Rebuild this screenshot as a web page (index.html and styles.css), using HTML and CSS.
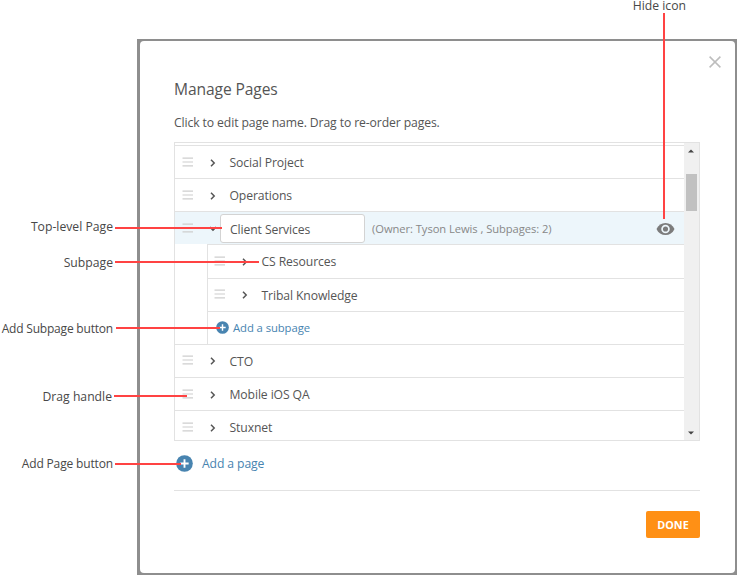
FILE: index.html
```html
<!DOCTYPE html>
<html lang="en">
<head>
<meta charset="utf-8">
<title>Manage Pages</title>
<link rel="stylesheet" href="styles.css">
</head>
<body>
<svg class="defs" aria-hidden="true">
  <symbol id="handle" viewBox="0 0 12 10"><path d="M.5 1.2H11M.5 5H11M.5 8.8H11" fill="none" stroke="#cecece" stroke-width="1.2"/></symbol>
  <symbol id="chevron" viewBox="0 0 8 8"><path d="M2 .8L5.2 4L2 7.2" fill="none" stroke="#555" stroke-width="1.5"/></symbol>
  <symbol id="plus" viewBox="0 0 18 18"><circle cx="9" cy="9" r="8.8" fill="#4884b0"/><path d="M9 4.6v8.8M4.6 9h8.8" stroke="#fff" stroke-width="2"/></symbol>
</svg>
<div class="backdrop">
  <main class="modal">
    <svg class="close" viewBox="0 0 12 12"><path d="M.6.6l10.8 10.8M11.4.6L.6 11.4" fill="none" stroke="#bdbdbd" stroke-width="1.5"/></svg>
    <h1>Manage Pages</h1>
    <p class="hint">Click to edit page name. Drag to re-order pages.</p>
    <div class="list">
      <div class="rows">
        <div class="row"><svg class="handle"><use href="#handle"/></svg><svg class="chevron"><use href="#chevron"/></svg><span>Social Project</span></div>
        <div class="row"><svg class="handle"><use href="#handle"/></svg><svg class="chevron"><use href="#chevron"/></svg><span>Operations</span></div>
        <div class="row active">
          <svg class="handle"><use href="#handle"/></svg><svg class="chevron open"><use href="#chevron"/></svg>
          <div class="field">Client Services</div>
          <span class="meta">(Owner: Tyson Lewis , Subpages: 2)</span>
          <svg class="eye" viewBox="0 0 20 14"><path d="M.5 7C2.4 2.8 5.9.6 10 .6S17.600 2.800 19.500 7C17.600 11.200 14.100 13.400 10 13.400S2.400 11.200.5 7Z" fill="#7c7c7c"/><circle cx="10" cy="7" r="3.6" fill="none" stroke="#edf6fb" stroke-width="1.800"/></svg>
        </div>
        <div class="children">
          <div class="row"><svg class="handle"><use href="#handle"/></svg><svg class="chevron"><use href="#chevron"/></svg><span>CS Resources</span></div>
          <div class="row"><svg class="handle"><use href="#handle"/></svg><svg class="chevron"><use href="#chevron"/></svg><span>Tribal Knowledge</span></div>
          <div class="row add-sub"><svg class="plus"><use href="#plus"/></svg><span>Add a subpage</span></div>
        </div>
        <div class="row"><svg class="handle"><use href="#handle"/></svg><svg class="chevron"><use href="#chevron"/></svg><span>CTO</span></div>
        <div class="row"><svg class="handle"><use href="#handle"/></svg><svg class="chevron"><use href="#chevron"/></svg><span>Mobile iOS QA</span></div>
        <div class="row"><svg class="handle"><use href="#handle"/></svg><svg class="chevron"><use href="#chevron"/></svg><span>Stuxnet</span></div>
      </div>
      <div class="scrollbar">
        <svg viewBox="0 0 6 4"><path d="M0 3.500L3 .5L6 3.500Z" fill="#444"/></svg>
        <div class="thumb"></div>
        <svg class="down" viewBox="0 0 6 4"><path d="M0 .5H6L3 3.500Z" fill="#444"/></svg>
      </div>
    </div>
    <div class="add-page"><svg><use href="#plus"/></svg><span>Add a page</span></div>
    <footer><button>DONE</button></footer>
  </main>
</div>
<div class="callouts">
  <svg viewBox="0 0 737 575"><path d="M115 228H222M115 262H259M116 328H220M114 396H187M115 464H181M664 13V219" fill="none" stroke="#ff4343" stroke-width="2"/></svg>
  <span class="label top-level">Top-level Page</span>
  <span class="label subpage">Subpage</span>
  <span class="label add-subpage">Add Subpage button</span>
  <span class="label drag">Drag handle</span>
  <span class="label add">Add Page button</span>
  <span class="label hide">Hide icon</span>
</div>
</body>
</html>
```

FILE: styles.css
```css
* { box-sizing: border-box; }
body {
  margin: 0;
  padding-top: 39px;
  width: 737px;
  height: 575px;
  overflow: hidden;
  position: relative;
  background: #fff;
  color: #555;
  font: 12.2px/18px "Open Sans", "Noto Sans", sans-serif;
  letter-spacing: -0.11px;
}
svg { display: block; flex: none; }
.defs { position: absolute; width: 0; height: 0; }
.backdrop {
  margin: 0 0 0 137px;
  padding: 2px 2px 2px 3px;
  height: 536px;
  background: #8e8e8e;
}
.modal {
  display: flex;
  flex-direction: column;
  height: 532px;
  padding: 0 35px 0 34px;
  background: #fff;
  border-radius: 4px;
}
.close { width: 12px; height: 12px; margin: 15px -21px 0 auto; }
h1 { margin: 9px 0 0; font-size: 15.6px; line-height: 24px; font-weight: 400; letter-spacing: -0.1px; }
.hint { margin: 12px 0 0; height: 19px; line-height: 19px; }
.list {
  display: flex;
  width: 526px;
  height: 299px;
  margin-top: 10px;
  border: 1px solid #e2e2e2;
  overflow: hidden;
}
.rows { flex: 1; padding-top: 2px; }
.row {
  display: flex;
  align-items: center;
  height: 33.15px;
  padding-left: 7px;
  border-top: 1px solid #e2e2e2;
}
.handle { width: 12px; height: 10px; margin-top: -1px; }
.chevron { width: 8px; height: 8px; margin: 1px 14px 0 15px; }
.row > .chevron + span { margin-left: -1.5px; padding-top: 2px; }
.active { background: #edf6fb; }
.chevron.open { transform: rotate(90deg); margin-right: 3px; }
.field {
  width: 145px;
  height: 29px;
  padding-left: 9px;
  line-height: 29px;
  background: #fff;
  border: 1px solid #d3d3d3;
  border-radius: 3px;
}
.meta { margin-left: 7px; padding-top: 2px; font-size: 11.2px; letter-spacing: -0.06px; color: #888; }
.eye { width: 19px; height: 14px; margin: 2px 9px 0 auto; }
.children { margin-left: 32px; border-left: 1px solid #e2e2e2; }
.children .row { padding-left: 6px; }
.children .add-sub { padding-left: 7px; font-size: 11.3px; letter-spacing: -0.08px; }
.add-sub span { padding-top: 1px; }
.add-sub, .add-page { color: #4884b0; }
.plus { width: 13px; height: 13px; margin: 0 4px 0 1px; }
.scrollbar {
  display: flex;
  flex-direction: column;
  align-items: center;
  width: 15px;
  padding: 6px 1px 5px 0;
  background: #f0f0f0;
}
.scrollbar svg { width: 6px; height: 4px; }
.thumb { width: 11px; height: 37px; margin-top: 21px; background: #c1c1c1; }
.scrollbar .down { margin-top: auto; }
.add-page { display: flex; align-items: center; gap: 9px; height: 18px; margin: 13px 0 0 2px; }
.add-page svg { width: 17px; height: 17px; }
.add-page span { padding-top: 1px; }
footer {
  display: flex;
  justify-content: flex-end;
  width: 526px;
  margin-top: 18px;
  padding-top: 20px;
  border-top: 1px solid #e2e2e2;
}
button {
  width: 54px;
  height: 27px;
  padding: 0;
  border: 0;
  border-radius: 2px;
  background: #ff9015;
  color: #fff;
  font: 700 10.8px/27px "Open Sans", sans-serif;
}
.callouts { position: absolute; inset: 0; color: #484848; letter-spacing: 0; }
.callouts svg { width: 737px; height: 575px; }
.label { position: absolute; right: 624px; white-space: nowrap; font-size: 12.2px; line-height: 18px; }
.top-level { top: 218px; }
.subpage { top: 254px; }
.add-subpage { top: 320px; font-size: 12px; letter-spacing: -0.2px; }
.drag { top: 388px; right: 625px; }
.add { top: 455px; font-size: 12px; letter-spacing: -0.15px; }
.hide { top: 0; right: 51px; line-height: 11px; }
```
